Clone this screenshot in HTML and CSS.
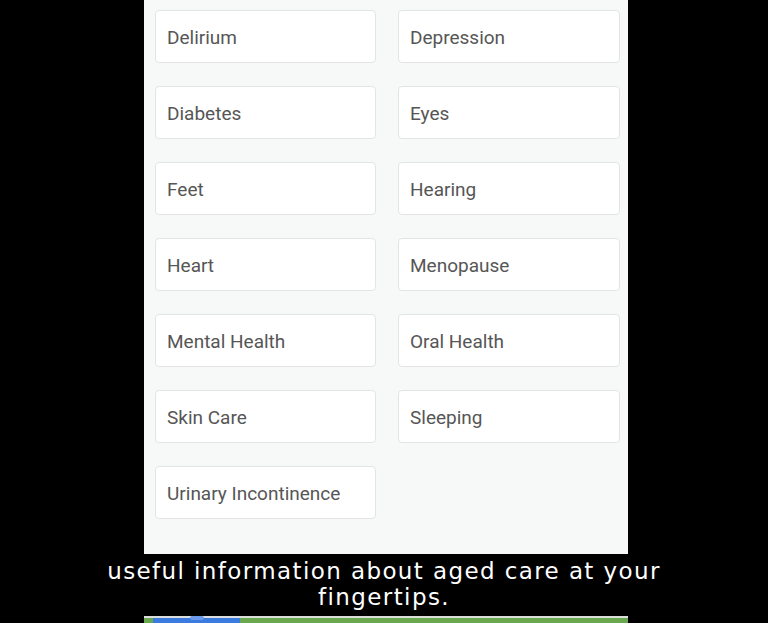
FILE: index.html
```html
<!DOCTYPE html>
<html lang="en">
<head>
<meta charset="utf-8">
<title>Topics</title>
<link rel="stylesheet" href="styles.css">
</head>
<body>
<div class="screen">
  <div class="panel">
    <div class="grid">
      <div class="item">Delirium</div>
      <div class="item">Depression</div>
      <div class="item">Diabetes</div>
      <div class="item">Eyes</div>
      <div class="item">Feet</div>
      <div class="item">Hearing</div>
      <div class="item">Heart</div>
      <div class="item">Menopause</div>
      <div class="item">Mental Health</div>
      <div class="item">Oral Health</div>
      <div class="item">Skin Care</div>
      <div class="item">Sleeping</div>
      <div class="item">Urinary Incontinence</div>
    </div>
  </div>
  <div class="caption">useful information about aged care at your<br>fingertips.</div>
  <div class="strip">
    <div class="strip-line"></div>
    <div class="strip-body"><div class="blue"><div class="bump"></div></div></div>
  </div>
</div>
</body>
</html>
```
FILE: styles.css
```css
html, body {
  margin: 0;
  padding: 0;
  background: #000;
}
.screen {
  width: 768px;
  height: 623px;
  overflow: hidden;
  background: #000;
}
.panel {
  margin-left: 144px;
  width: 484px;
  height: 554px;
  background: #f7f8f8;
  box-sizing: border-box;
  padding: 10px 0 0 11px;
}
.grid {
  display: grid;
  grid-template-columns: 221px 222px;
  grid-auto-rows: 53px;
  column-gap: 22px;
  row-gap: 23px;
}
.item {
  background: #fff;
  border: 1px solid #e3e4e4;
  border-radius: 4px;
  box-sizing: border-box;
  display: flex;
  align-items: center;
  padding-left: 11px;
  padding-top: 1px;
  font-family: Roboto, "Liberation Sans", sans-serif;
  font-size: 19px;
  color: #565656;
}
.caption {
  height: 62px;
  box-sizing: border-box;
  padding-top: 4px;
  text-align: center;
  color: #fff;
  font-family: "DejaVu Sans", "Open Sans", sans-serif;
  font-size: 23px;
  letter-spacing: 1.4px;
  line-height: 26px;
}
.strip {
  margin-left: 144px;
  width: 484px;
  height: 7px;
}
.strip-line {
  height: 2px;
  background: #dcdedc;
}
.strip-body {
  height: 5px;
  background: #6aa84f;
  display: flex;
  padding-left: 9px;
}
.blue {
  width: 87px;
  height: 5px;
  background: #3b7be0;
  position: relative;
}
.bump {
  position: absolute;
  left: 37px;
  top: -2px;
  width: 14px;
  height: 4px;
  background: #6a9ae8;
  border-radius: 3px;
}
```
